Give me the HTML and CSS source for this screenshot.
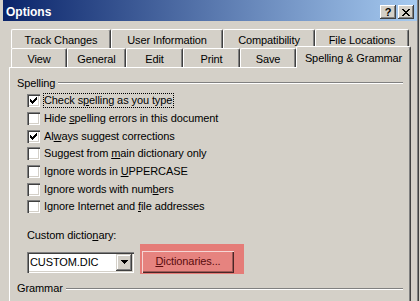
FILE: index.html
```html
<!DOCTYPE html>
<html>
<head>
<meta charset="utf-8">
<title>Options</title>
<link rel="stylesheet" href="styles.css">
</head>
<body>
<div class="window">
  <div class="titlebar">
    <span class="title">Options</span>
    <div class="caption-btns">
      <span class="cbtn help">?</span>
      <span class="cbtn close"><svg width="8" height="7" viewBox="0 0 8 7" shape-rendering="crispEdges"><path d="M0 0h2v1h-2zM6 0h2v1h-2zM1 1h2v1h-2zM5 1h2v1h-2zM2 2h4v1h-4zM3 3h2v1h-2zM2 4h4v1h-4zM1 5h2v1h-2zM5 5h2v1h-2zM0 6h2v1h-2zM6 6h2v1h-2z" fill="#000"/></svg></span>
    </div>
  </div>
  <div class="tabs">
    <div class="tabrow back">
      <div class="tab t-track">Track Changes</div>
      <div class="tab t-user">User Information</div>
      <div class="tab t-compat">Compatibility</div>
      <div class="tab t-files">File Locations</div>
    </div>
    <div class="tabrow front">
      <div class="tab t-view">View</div>
      <div class="tab t-general">General</div>
      <div class="tab t-edit">Edit</div>
      <div class="tab t-print">Print</div>
      <div class="tab t-save">Save</div>
      <div class="tab t-spell selected">Spelling &amp; Grammar</div>
    </div>
    <div class="panel">
      <div class="group"><span class="group-title">Spelling</span><span class="etch"></span></div>
      <div class="check"><span class="box"><svg class="mark" width="7" height="7" viewBox="0 0 7 7" shape-rendering="crispEdges"><path d="M0 2h1v3h-1zM1 3h1v3h-1zM2 4h1v3h-1zM3 3h1v3h-1zM4 2h1v3h-1zM5 1h1v3h-1zM6 0h1v3h-1z" fill="#000"/></svg></span><span class="lbl focus">Check s<u>p</u>elling as you type</span></div>
      <div class="check"><span class="box"></span><span class="lbl">Hide <u>s</u>pelling errors in this document</span></div>
      <div class="check"><span class="box"><svg class="mark" width="7" height="7" viewBox="0 0 7 7" shape-rendering="crispEdges"><path d="M0 2h1v3h-1zM1 3h1v3h-1zM2 4h1v3h-1zM3 3h1v3h-1zM4 2h1v3h-1zM5 1h1v3h-1zM6 0h1v3h-1z" fill="#000"/></svg></span><span class="lbl">Al<u>w</u>ays suggest corrections</span></div>
      <div class="check"><span class="box"></span><span class="lbl">Suggest from <u>m</u>ain dictionary only</span></div>
      <div class="check"><span class="box"></span><span class="lbl">Ignore words in <u>U</u>PPERCASE</span></div>
      <div class="check"><span class="box"></span><span class="lbl">Ignore words with num<u>b</u>ers</span></div>
      <div class="check"><span class="box"></span><span class="lbl">Ignore Internet and <u>f</u>ile addresses</span></div>
      <div class="field-label">Custom dictio<u>n</u>ary:</div>
      <div class="dict-row">
        <div class="combo">
          <span class="combo-text">CUSTOM.DIC</span>
          <span class="combo-btn"><svg width="7" height="4" viewBox="0 0 7 4" shape-rendering="crispEdges"><path d="M0 0h7v1h-7zM1 1h5v1h-5zM2 2h3v1h-3zM3 3h1v1h-1z" fill="#000"/></svg></span>
        </div>
        <div class="highlight">
          <div class="pushbtn"><u>D</u>ictionaries...</div>
        </div>
      </div>
      <div class="group grammar"><span class="group-title">Grammar</span><span class="etch"></span></div>
    </div>
  </div>
</div>
</body>
</html>
```
FILE: styles.css
```css
* { box-sizing: border-box; }
html, body { margin: 0; padding: 0; }
body {
  width: 420px;
  height: 301px;
  overflow: hidden;
  background: #d4d0c8;
  font-family: "Liberation Sans", Arial, sans-serif;
  font-size: 11px;
  letter-spacing: -0.1px;
  color: #000;
}
u { text-decoration: underline; text-underline-offset: 1px; }

.window {
  width: 420px;
  height: 301px;
  padding: 0 3px;
  background: #d4d0c8;
  box-shadow: inset -1px 0 #d4d0c8, inset -2px 0 #404040, inset -3px 0 #808080;
  overflow: hidden;
}

.titlebar {
  height: 21px;
  display: flex;
  justify-content: space-between;
  align-items: flex-start;
  padding: 0 3px;
  background: linear-gradient(to right, #0a246a, #a6caf0);
}
.title {
  color: #fff;
  font-weight: bold;
  font-size: 12px;
  letter-spacing: 0;
  line-height: 14px;
  margin-top: 5px;
}
.caption-btns { display: flex; gap: 2px; margin-top: 5px; }
.cbtn {
  width: 16px;
  height: 14px;
  background: #d4d0c8;
  box-shadow: inset -1px -1px #404040, inset 1px 1px #fff, inset -2px -2px #808080;
  display: flex;
  align-items: center;
  justify-content: center;
}
.cbtn.help { font-weight: bold; font-size: 11px; line-height: 12px; padding-bottom: 1px; }

.tabs { margin-top: 8px; padding-left: 6px; }
.tabrow { display: flex; margin-left: 2px; height: 19px; }
.tab {
  height: 19px;
  padding-top: 2px;
  line-height: 17px;
  text-align: center;
  white-space: nowrap;
  background: #d4d0c8;
  border-top: 1px solid #fff;
  border-left: 1px solid #fff;
  border-right: 1px solid #404040;
  border-top-left-radius: 2px;
  border-top-right-radius: 2px;
  box-shadow: inset -1px 0 #808080;
}
.t-track { width: 100px; }
.t-user { width: 112px; }
.t-compat { width: 92px; }
.t-files { width: 94px; }
.t-view { width: 56px; }
.t-general { width: 59px; }
.t-edit { width: 57px; }
.t-print { width: 57px; }
.t-save { width: 56px; }
.t-spell { width: 115px; }
.tab.selected {
  position: relative;
  z-index: 1;
  height: 22px;
  margin-top: -2px;
  padding-top: 2px;
  line-height: 18px;
}

.panel {
  width: 402px;
  height: 240px;
  padding: 6px 7px 0 7px;
  background: #d4d0c8;
  border-top: 1px solid #fff;
  border-left: 1px solid #fff;
  border-right: 1px solid #404040;
  box-shadow: inset -1px 0 #808080;
}

.group {
  display: flex;
  align-items: center;
  height: 18px;
}
.group-title { line-height: 13px; }
.etch {
  flex: 1;
  height: 2px;
  margin-left: 3px;
  border-top: 1px solid #808080;
  border-bottom: 1px solid #fff;
}
.grammar { margin-top: 6px; }

.check {
  display: flex;
  align-items: center;
  height: 17.67px;
  padding-left: 10px;
}
.box {
  width: 13px;
  height: 13px;
  flex: none;
  background: #fff;
  box-shadow: inset 1px 1px #808080, inset 2px 2px #404040, inset -1px -1px #fff, inset -2px -2px #d4d0c8;
  display: flex;
  align-items: center;
  justify-content: center;
}
.mark { display: block; }
.lbl {
  margin-left: 3px;
  line-height: 13px;
  border: 1px solid transparent;
  padding: 0 1px 0 0;
  white-space: nowrap;
}
.lbl.focus { border: 1px dotted #000; }

.field-label {
  margin-top: 13px;
  padding-left: 10px;
  line-height: 13px;
  height: 13px;
}
.dict-row {
  display: flex;
  align-items: flex-start;
  margin-top: 2px;
  padding-left: 10px;
  height: 30px;
}
.combo {
  width: 107px;
  height: 21px;
  margin-top: 8px;
  background: #fff;
  box-shadow: inset 1px 1px #808080, inset 2px 2px #404040, inset -1px -1px #fff, inset -2px -2px #d4d0c8;
  display: flex;
  align-items: center;
  padding: 2px;
}
.combo-text { flex: 1; padding-left: 1px; line-height: 13px; }
.combo-btn {
  width: 16px;
  height: 17px;
  background: #d4d0c8;
  box-shadow: inset -1px -1px #404040, inset 1px 1px #d4d0c8, inset -2px -2px #808080, inset 2px 2px #fff;
  display: flex;
  align-items: center;
  justify-content: center;
}
.combo-btn svg { display: block; }

.highlight {
  width: 104px;
  height: 30px;
  margin-left: 6px;
  padding: 7px 0 0 2px;
  background: #e57c78;
}
.pushbtn {
  width: 92px;
  height: 22px;
  background: #e6837f;
  color: #5a0c0c;
  text-align: center;
  line-height: 20px;
  box-shadow: inset 1px 1px #f6d6d4, inset -1px -1px #4a2626, inset -2px -2px #9c5855;
}
```
